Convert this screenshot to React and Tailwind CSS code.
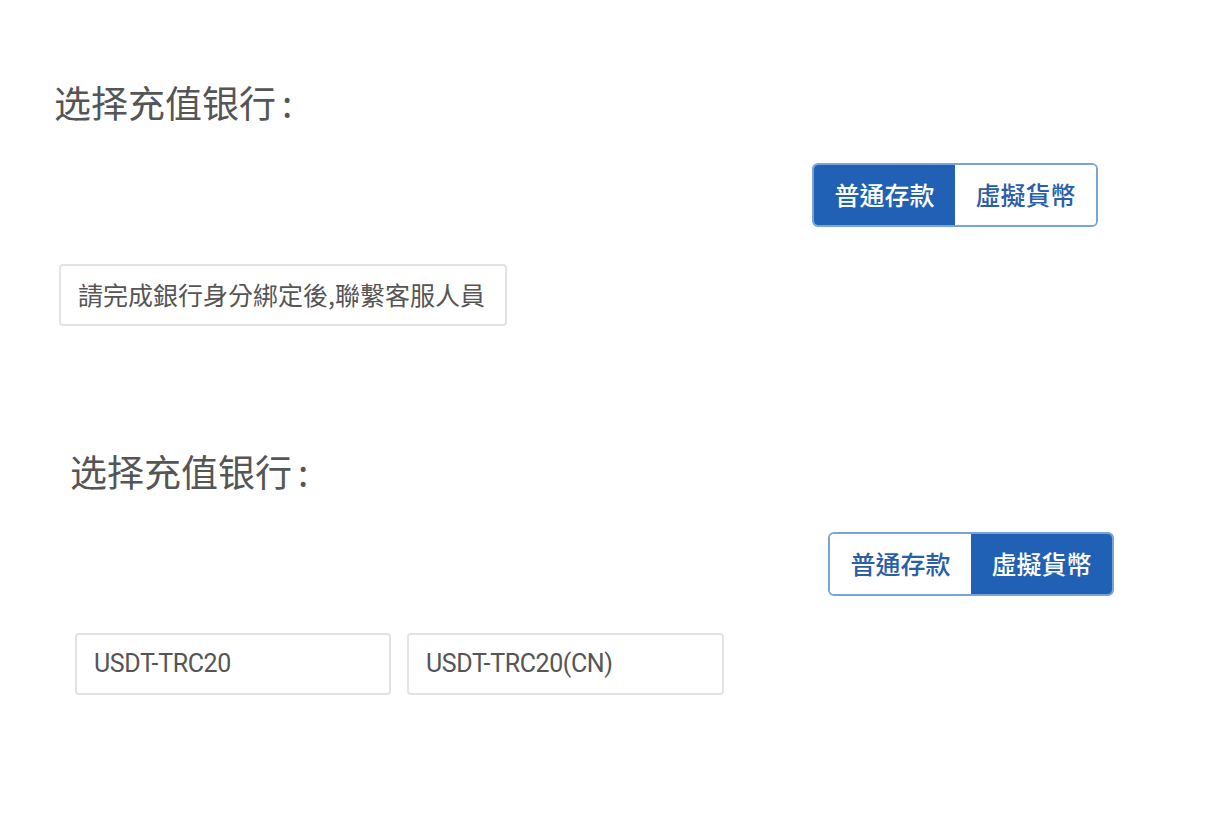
const cjk = { fontFamily: '"Noto Sans CJK SC", "Noto Sans", sans-serif' }
const tc = { fontFamily: '"Noto Sans CJK TC", "Noto Sans", sans-serif' }
const latin = { fontFamily: 'Roboto, "Noto Sans", sans-serif' }

function Toggle({ active }) {
  const on = 'bg-[#2161b5] text-white'
  const off = 'bg-white text-[#2a5ea8]'
  return (
    <div className="flex justify-end">
      <div className="flex h-[64px] rounded-[6px] border-2 border-[#7aa3d8] overflow-hidden" style={tc}>
        <div className={`flex w-[141px] items-center justify-center text-[25px] font-medium ${active === 0 ? on : off}`}>
          普通存款
        </div>
        <div className={`flex w-[141px] items-center justify-center text-[25px] font-medium ${active === 1 ? on : off}`}>
          虛擬貨幣
        </div>
      </div>
    </div>
  )
}

function Option({ children, w, font }) {
  return (
    <div
      className={`flex h-[62px] items-center rounded-[4px] border-2 border-[#e3e3e3] bg-white pl-[17px] text-[#555] ${w}`}
      style={font}
    >
      {children}
    </div>
  )
}

function Section({ left, active, children, top }) {
  return (
    <div className={`${left} w-[1046px] ${top}`}>
      <div className="flex h-[48px] items-center text-[37px] leading-[48px] text-[#555]" style={cjk}>
        <span className="pl-[2px]">选择充值银行</span>
        <span className="ml-[6px]">:</span>
      </div>
      <div className="mt-[37px]">
        <Toggle active={active} />
      </div>
      <div className="mt-[37px] ml-[7px] flex gap-[16px]">{children}</div>
    </div>
  )
}

export default function App() {
  return (
    <div className="w-[1222px] h-[834px] bg-white overflow-hidden">
      <Section left="ml-[52px]" active={0} top="pt-[78px]">
        <Option w="w-[448px]" font={tc}>
          <span className="text-[25px]">請完成銀行身分綁定後,聯繫客服人員</span>
        </Option>
      </Section>
      <Section left="ml-[68px]" active={1} top="pt-[121px]">
        <Option w="w-[316px]" font={latin}>
          <span className="text-[25px] tracking-[-0.4px]">USDT-TRC20</span>
        </Option>
        <Option w="w-[317px]" font={latin}>
          <span className="text-[25px] tracking-[-0.4px]">USDT-TRC20(CN)</span>
        </Option>
      </Section>
    </div>
  )
}
